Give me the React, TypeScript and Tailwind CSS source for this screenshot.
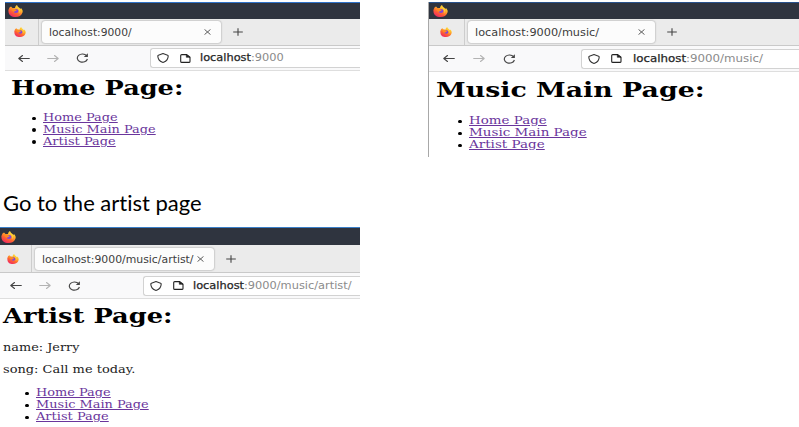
import { useLayoutEffect, useRef, useState, type ReactNode } from "react";

const SANS = "font-['DejaVu_Sans',sans-serif]";
const SERIF = "font-['DejaVu_Serif',serif]";

/* Stretches a single line of text horizontally to the given width. */
function Fit({ width, className = "", children }: { width: number; className?: string; children: ReactNode }) {
  const ref = useRef<HTMLSpanElement>(null);
  const [scale, setScale] = useState(1);
  useLayoutEffect(() => {
    if (ref.current) setScale(width / ref.current.offsetWidth);
  }, [width]);
  return (
    <div className="flex shrink-0 whitespace-nowrap" style={{ width }}>
      <span ref={ref} className={`block shrink-0 origin-left ${className}`} style={{ transform: `scaleX(${scale})` }}>
        {children}
      </span>
    </div>
  );
}

function Firefox({ className }: { className: string }) {
  return (
    <svg className={`shrink-0 ${className}`} viewBox="0 0 30 24" preserveAspectRatio="none">
      <defs>
        <linearGradient id="flame" x1="0.85" y1="0" x2="0.25" y2="1">
          <stop offset="0" stopColor="#fff04a" />
          <stop offset="0.35" stopColor="#ffb52b" />
          <stop offset="0.65" stopColor="#ff6430" />
          <stop offset="1" stopColor="#ee2366" />
        </linearGradient>
      </defs>
      <path d="M3 5 L6 3 L9 6 L14 6 C14 3 16 1 18 0 C19 4 23 5 25 8 L26 6 C29 9 30 12 29 15 C27 21 22 24 15 24 C7 24 1 20 1 13 C0 10 2 8 3 5Z" fill="url(#flame)" />
      <ellipse cx="16" cy="12" rx="5" ry="4.2" fill="#8144d8" />
      <path d="M6 7 C9 6 13 7 15 9 L18 10 C16 12 14 12 13 13 C10 14 8 12 6 7Z" fill="#ff8a22" />
      <path d="M17 3 C23 6 26 12 22 17 C24 11 21 7 17 3Z" fill="#ffdc3e" />
    </svg>
  );
}

function Arrow({ className }: { className: string }) {
  return (
    <svg className={`h-[9px] w-3 shrink-0 ${className}`} viewBox="0 0 12 9" fill="none" stroke="currentColor" strokeWidth="1.1" strokeLinecap="round" strokeLinejoin="round">
      <path d="M11.3 4.5H.8M4.5 1.5 .8 4.5l3.7 3" />
    </svg>
  );
}

function Reload() {
  return (
    <svg className="h-[10px] w-[13px] shrink-0 text-[#444]" viewBox="0 0 13 10" fill="none" stroke="currentColor" strokeWidth="1.15">
      <path d="M10.6 2.7A5.1 4.1 0 1 0 11.4 6" />
      <path d="M11.9.3v3.6H7.8Z" fill="currentColor" stroke="none" />
    </svg>
  );
}

function Shield() {
  return (
    <svg className="h-[10px] w-3 shrink-0 text-[#333]" viewBox="0 0 12 10" fill="none" stroke="currentColor" strokeWidth="1.1" strokeLinejoin="round">
      <path d="M6 .6 10.6 2.2Q11.2 2.4 11.2 3C11.1 6.2 9.4 8.2 6.6 9.3Q6 9.5 5.4 9.3C2.6 8.2.9 6.2.8 3Q.8 2.4 1.4 2.2Z" />
    </svg>
  );
}

function Doc() {
  return (
    <svg className="h-[9px] w-[11px] shrink-0 text-[#222]" viewBox="0 0 11 9" fill="none" stroke="currentColor" strokeWidth="1.1" strokeLinejoin="round">
      <path d="M1.8.6H6.8L10 3.2V7.4Q10 8.4 8.8 8.4H1.8Q.7 8.4.7 7.4V1.6Q.7.6 1.8.6Z" />
      <path d="M6.3.6V3.3H10Z" fill="currentColor" strokeWidth=".6" />
    </svg>
  );
}

function Close() {
  return (
    <svg className="h-[6px] w-[7px] shrink-0 text-[#555]" viewBox="0 0 7 6" stroke="currentColor" strokeWidth=".95">
      <path d="M.5.4l6 5.2M6.5.4l-6 5.2" />
    </svg>
  );
}

function Plus() {
  return (
    <svg className="h-2 w-[10px] shrink-0 text-[#444]" viewBox="0 0 10 8" stroke="currentColor" strokeWidth="1.1">
      <path d="M5 .2v7.6M.2 4h9.6" />
    </svg>
  );
}

interface ChromeProps {
  tab: string;
  tabTextWidth: number;
  path: string;
  urlWidth: number;
  titleBar: string;
  tabWidth: string;
  pinned: string;
  icons: string;
  tabsHeight: string;
  barHeight: string;
  nav: string;
  gap: string;
  urlBox: string;
  urlGap: string;
}

function Chrome(p: ChromeProps) {
  return (
    <div className={`${SANS} text-[10px] text-[#3c3c3c]`}>
      <div className={`flex items-end border-t bg-[#2f343f] ${p.titleBar}`}>
        <Firefox className={`mb-[2px] h-3 w-[15px] ${p.icons}`} />
      </div>
      <div className={`flex items-center border-b border-[#c9c9c9] bg-[#ebebeb] ${p.tabsHeight}`}>
        <div className={`flex h-full shrink-0 items-center justify-end border-r border-[#cdcdcd] ${p.pinned}`}>
          <Firefox className="h-[10px] w-3" />
        </div>
        <div className={`ml-[3px] flex h-[22px] shrink-0 items-center justify-between rounded-[3px] bg-[#fcfcfc] shadow-[0_0_2px_#888] ${p.tabWidth}`}>
          <Fit width={p.tabTextWidth} className="pt-px leading-[21px]">{p.tab}</Fit>
          <Close />
        </div>
        <div className="ml-3"><Plus /></div>
      </div>
      <div className={`flex items-center border-b border-[#dedede] bg-[#f9f9fa] ${p.barHeight} ${p.nav}`}>
        <Arrow className="text-[#444]" />
        <Arrow className={`rotate-180 text-[#b3b3b3] ${p.gap}`} />
        <div className={`flex ${p.gap}`}><Reload /></div>
        <div className={`flex h-5 min-w-0 flex-1 items-center overflow-hidden rounded-l-[3px] border border-r-0 border-[#d2d2d2] bg-white pl-[6px] ${p.urlBox}`}>
          <Shield />
          <div className="ml-[11px] flex"><Doc /></div>
          <div className={p.urlGap}>
            <Fit width={p.urlWidth} className="leading-[18px] text-[#8b8b8b]">
              <span className="text-[#262626] [-webkit-text-stroke:0.25px_#262626]">localhost</span>{p.path}
            </Fit>
          </div>
        </div>
      </div>
    </div>
  );
}

function Links({ widths, row, className }: { widths: number[]; row: string; className: string }) {
  const names = ["Home Page", "Music Main Page", "Artist Page"];
  return (
    <ul className={`${SERIF} text-[11.2px] ${className}`}>
      {names.map((name, i) => (
        <li key={name} className={`flex items-center ${row}`}>
          <span className="mt-px mr-[7px] h-[3.5px] w-1 shrink-0 rounded-full bg-black" />
          <Fit width={widths[i]} className={row}>
            <a className="text-[#6a359c] underline decoration-1 underline-offset-1">{name}</a>
          </Fit>
        </li>
      ))}
    </ul>
  );
}

function Title({ width, children }: { width: number; children: string }) {
  return (
    <h1 className={`${SERIF} text-[19.5px] font-bold text-black`}>
      <Fit width={width} className="leading-[24px]">{children}</Fit>
    </h1>
  );
}

export default function App() {
  return (
    <main className="flex h-[427px] w-[799px] flex-col overflow-hidden bg-white">
      <div className="flex h-[157px] shrink-0 gap-[68px] pt-[2px] pl-[5px]">
        <section className="w-[355px] shrink-0">
          <Chrome tab="localhost:9000/" tabTextWidth={82.5} path=":9000" urlWidth={84} titleBar="h-[17px] border-[#2f72c8]" tabWidth="w-[179px] pl-[7px] pr-[10px]" pinned="w-[34px] pr-[12px]" icons="ml-[3px]" tabsHeight="h-[27px]" barHeight="h-[25px]" nav="pl-[13px]" gap="ml-[17px]" urlBox="ml-[61px]" urlGap="ml-[9px]" />
          <div className="pt-[5.5px] pl-[6px]">
            <Title width={172}>Home Page:</Title>
            <Links widths={[75, 113, 73]} row="h-[11.8px] leading-[11.8px]" className="mt-[11.5px] ml-[21px]" />
          </div>
        </section>
        <section className="w-[371px] shrink-0 border-l border-[#a8a8a8]">
          <Chrome tab="localhost:9000/music/" tabTextWidth={124} path=":9000/music/" urlWidth={130} titleBar="h-[17px] border-[#29528c]" tabWidth="w-[187px] pl-[7px] pr-[10px]" pinned="w-[36px] pr-[12px]" icons="ml-[4px]" tabsHeight="h-[27px]" barHeight="h-[26px]" nav="pl-[14px]" gap="ml-[18px]" urlBox="ml-[65px]" urlGap="ml-[11px]" />
          <div className="pt-[7px] pl-[7px]">
            <Title width={268}>Music Main Page:</Title>
            <Links widths={[78, 118, 76]} row="h-[12px] leading-[12px]" className="mt-3 ml-[22px]" />
          </div>
        </section>
      </div>
      <p className="mt-[33px] shrink-0 pl-[3px] font-['Lato',sans-serif] text-[21px] text-black [font-variant-ligatures:none]">
        <Fit width={199} className="leading-[26px]">Go to the artist page</Fit>
      </p>
      <section className="mt-[11px] w-[360px] shrink-0">
        <Chrome tab="localhost:9000/music/artist/" tabTextWidth={151} path=":9000/music/artist/" urlWidth={158} titleBar="h-[18px] border-[#3b7fc8]" tabWidth="w-[179px] pl-[7px] pr-[10px]" pinned="w-[32px] pr-[12px]" icons="ml-[1px]" tabsHeight="h-[28px]" barHeight="h-[26px]" nav="pl-[10px]" gap="ml-[17px]" urlBox="ml-[62px]" urlGap="ml-[9px]" />
        <div className="pt-[6px] pl-[3px]">
          <Title width={170}>Artist Page:</Title>
          <div className={`${SERIF} mt-[13px] flex flex-col gap-[10px] text-[11.2px] text-[#222]`}>
            <Fit width={77} className="leading-[12px]">name: Jerry</Fit>
            <Fit width={132} className="leading-[12px]">song: Call me today.</Fit>
          </div>
          <Links widths={[75, 113, 73]} row="h-[12px] leading-[12px]" className="mt-[11px] ml-[22px]" />
        </div>
      </section>
    </main>
  );
}
